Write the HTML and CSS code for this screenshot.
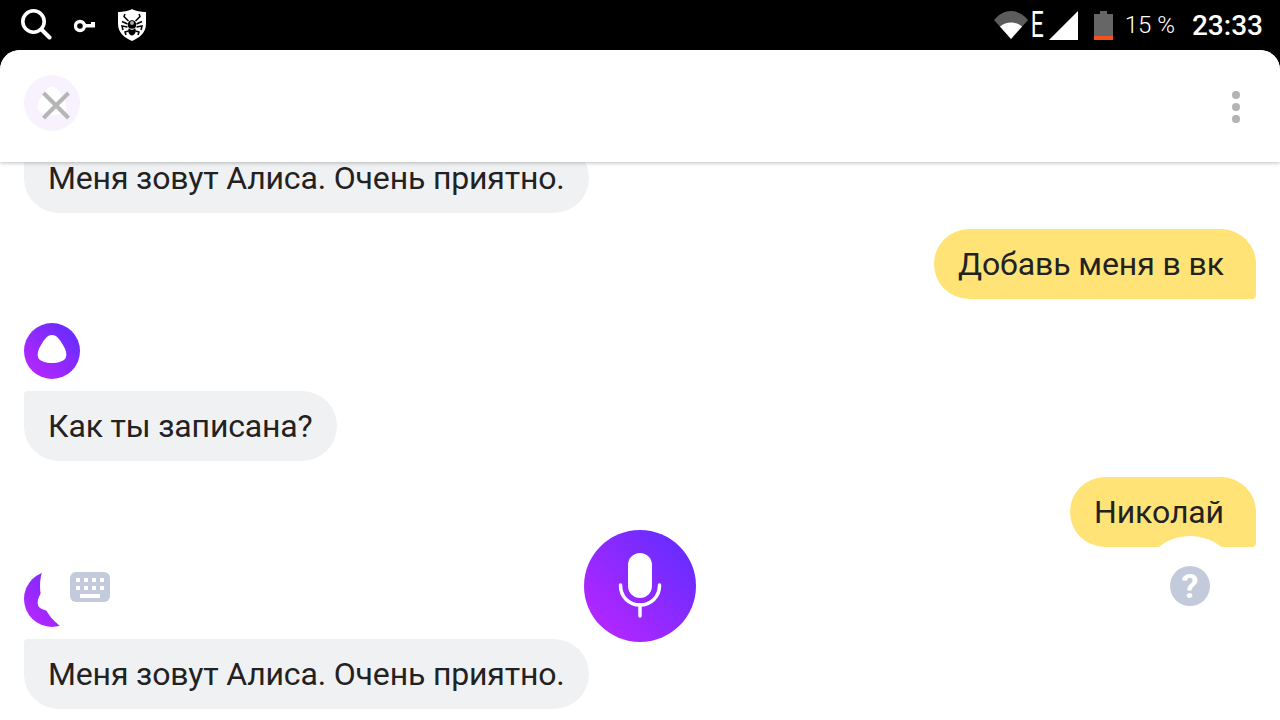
FILE: index.html
```html
<!DOCTYPE html>
<html lang="ru">
<head>
    <meta charset="UTF-8">
    <meta name="viewport" content="width=device-width, initial-scale=1.0">
    <title>Алиса</title>
    <link rel="stylesheet" href="styles.css">
</head>
<body>

    <div class="statusbar">
        <div class="status-left">
            <svg class="ic-search" width="32" height="32" viewBox="0 0 32 32"><circle cx="13.5" cy="12.5" r="10.7" fill="none" stroke="#fff" stroke-width="3.6"/><path d="M21.5 20.5 L29.5 28.5" stroke="#fff" stroke-width="4" stroke-linecap="round"/></svg>
            <svg class="ic-key" width="22" height="14" viewBox="0 0 22 14"><circle cx="6" cy="7" r="4.5" fill="none" stroke="#fff" stroke-width="3.4"/><path d="M10 5 H21 V8.500 H10 Z M17 3 H21 V6 H17 Z" fill="#fff"/></svg>
            <svg class="ic-shield" width="28" height="32" viewBox="0 0 28 32">
                <path d="M14 0 C17 2 23 3 28 3 V15 C28 24 21 29 14 32 C7 29 0 24 0 15 V3 C5 3 11 2 14 0 Z" fill="#fff"/>
                <path d="M10.500 13 C9 16 10 18 11 19 C9 22 11 26 14 26.500 C17 26 19 22 17 19 C18 18 19 16 17.500 13 C16 10.500 12 10.500 10.500 13 Z" fill="#000"/>
                <path d="M10.500 12 L6 7.500 L7 5 M17.500 12 L22 7.500 L21 5 M9.500 15 L4 12.500 M18.500 15 L24 12.500 M9.500 18 L4 17 L5 21 M18.500 18 L24 17 L23 21 M10.500 22 L7 23 L8 26 M17.500 22 L21 23 L20 26" stroke="#000" stroke-width="1.500" fill="none"/>
                <circle cx="14" cy="14" r="2" fill="#aaa"/>
                <path d="M11.500 19.500 C13 20.500 15 20.500 16.500 19.500" stroke="#fff" stroke-width="1" fill="none"/>
            </svg>
        </div>
        <div class="status-right">
            <svg class="ic-wifi" width="34" height="28" viewBox="0 0 34 28"><path d="M17 28 L0 9 C5 3 11 0 17 0 C23 0 29 3 34 9 Z" fill="#5c5c5c"/><path d="M17 28 L6 15.500 C9 13 13 11.500 17 11.500 C21 11.500 25 13 28 15.500 Z" fill="#fff"/></svg>
            <span class="net-letter">E</span>
            <svg class="ic-signal" width="29" height="29" viewBox="0 0 29 29"><path d="M29 0 V29 H0 Z" fill="#fff"/></svg>
            <svg class="ic-battery" width="19" height="29" viewBox="0 0 19 29"><path d="M6 0 H13 V3 H19 V25 H0 V3 H6 Z" fill="#666"/><rect y="25" width="19" height="4" fill="#f4511e"/></svg>
            <span class="battery-text">15 %</span>
            <span class="clock">23:33</span>
        </div>
    </div>

    <div class="sheet">
        <div class="topbar">
            <button class="close-btn" type="button">
                <svg width="56" height="56" viewBox="0 0 56 56">
                    <path d="M28 12 C33 12 36 17 39 22 C42 27 43 31 42 34 C41 38 34 40 28 40 C22 40 15 38 14 34 C13 31 14 27 17 22 C20 17 23 12 28 12 Z" fill="#fff"/>
                    <path d="M19.500 18 L44.500 43 M44.500 18 L19.500 43" stroke="#b5b5b5" stroke-width="4"/>
                </svg>
            </button>
            <div class="menu-dots"><i></i><i></i><i></i></div>
        </div>

        <div class="chat">
            <div class="msg msg-bot">Меня зовут Алиса. Очень приятно.</div>
            <div class="msg msg-user">Добавь меня в вк</div>
            <div class="avatar">
                <svg width="56" height="56" viewBox="0 0 56 56"><path d="M28 12 C33 12 36 17 39 22 C42 27 43 31 42 34 C41 38 34 40 28 40 C22 40 15 38 14 34 C13 31 14 27 17 22 C20 17 23 12 28 12 Z" fill="#fff"/></svg>
            </div>
            <div class="msg msg-bot">Как ты записана?</div>
            <div class="msg msg-user">Николай</div>
            <div class="avatar">
                <svg width="56" height="56" viewBox="0 0 56 56"><path d="M28 12 C33 12 36 17 39 22 C42 27 43 31 42 34 C41 38 34 40 28 40 C22 40 15 38 14 34 C13 31 14 27 17 22 C20 17 23 12 28 12 Z" fill="#fff"/></svg>
            </div>
            <div class="msg msg-bot">Меня зовут Алиса. Очень приятно.</div>
        </div>

        <div class="controls">
            <div class="side-btn">
                <svg class="ic-keyboard" width="40" height="30" viewBox="0 0 40 30">
                    <rect width="40" height="30" rx="6" fill="#c3cadb"/>
                    <path d="M6 6 h4 v4 h-4 z M14 6 h4 v4 h-4 z M22 6 h4 v4 h-4 z M30 6 h4 v4 h-4 z M6 14 h4 v4 h-4 z M14 14 h4 v4 h-4 z M22 14 h4 v4 h-4 z M30 14 h4 v4 h-4 z M10 22 h20 v4 h-20 z" fill="#fff"/>
                </svg>
            </div>
            <button class="mic-btn" type="button">
                <svg width="46" height="66" viewBox="0 0 46 66">
                    <rect x="11" y="0" width="24" height="45" rx="12" fill="#fff"/>
                    <path d="M3.500 32 C3.500 44 12 52 23 52 C34 52 42.500 44 42.500 32" fill="none" stroke="#fff" stroke-width="3.500" stroke-linecap="round"/>
                    <path d="M23 52 V63" stroke="#fff" stroke-width="3.500" stroke-linecap="round"/>
                </svg>
            </button>
            <div class="side-btn">
                <span class="help-icon">?</span>
            </div>
        </div>
    </div>

</body>
</html>
```

FILE: styles.css
```css
* {
  box-sizing: border-box;
}

html, body {
  height: 100%;
}

body {
  margin: 0;
  background-color: #000;
  font-family: 'Roboto', sans-serif;
  color: #222;
  overflow: hidden;
  display: flex;
  flex-direction: column;
}

/* status bar */
.statusbar {
  height: 50px;
  flex: none;
  display: flex;
  justify-content: space-between;
  align-items: center;
  padding: 0 17px 0 20px;
  color: #fff;
}

.status-left, .status-right {
  display: flex;
  align-items: center;
}

.ic-key {
  margin: 2px 0 0 22px;
}

.ic-shield {
  margin-left: 22px;
}

.net-letter {
  width: 14px;
  font-size: 37px;
  font-weight: 400;
  line-height: 28px;
  text-align: center;
  transform: scaleX(0.62);
}

.ic-signal {
  margin-left: 7px;
}

.ic-battery {
  margin-left: 16px;
}

.battery-text {
  margin-left: 12px;
  font-size: 24px;
  font-weight: 300;
}

.clock {
  margin-left: 17px;
  font-size: 28px;
  font-weight: 500;
}

/* main white sheet */
.sheet {
  position: relative;
  flex: 1;
  min-height: 0;
  display: flex;
  flex-direction: column;
  background-color: #fff;
  border-radius: 20px 20px 0 0;
  overflow: hidden;
}

.topbar {
  position: relative;
  z-index: 2;
  height: 112px;
  flex: none;
  display: flex;
  justify-content: space-between;
  align-items: center;
  padding: 0 40px 0 24px;
  background-color: #fff;
  box-shadow: 0 1px 4px rgba(0, 0, 0, 0.25);
}

.close-btn {
  width: 56px;
  height: 56px;
  margin-top: -7px;
  padding: 0;
  border: none;
  border-radius: 50%;
  background-color: #f7f2fe;
}

.close-btn svg, .avatar svg {
  display: block;
}

.menu-dots {
  display: flex;
  flex-direction: column;
  gap: 4px;
  margin-top: 1px;
}

.menu-dots i {
  width: 8px;
  height: 8px;
  border-radius: 50%;
  background-color: #b3b3b3;
}

/* chat */
.chat {
  flex: 1;
  min-height: 0;
  display: flex;
  flex-direction: column;
  justify-content: flex-end;
  align-items: flex-start;
  padding: 0 24px 11px;
  overflow: hidden;
}

.msg {
  flex: none;
  height: 70px;
  padding: 0 24px;
  font-size: 32px;
  letter-spacing: -0.16px;
  line-height: 70px;
  white-space: nowrap;
}

.msg-bot {
  background-color: #f0f1f3;
  border-radius: 4px 35px 35px 35px;
}

.msg-user {
  align-self: flex-end;
  margin: 16px 0 24px;
  padding-right: 32px;
  letter-spacing: -0.09px;
  background-color: #ffe376;
  border-radius: 35px 35px 4px 35px;
}

.avatar {
  flex: none;
  width: 56px;
  height: 56px;
  margin-bottom: 12px;
  border-radius: 50%;
  background: linear-gradient(45deg, #c026ff, #5a2dff);
}

/* bottom controls over the chat */
.controls {
  position: absolute;
  left: 40px;
  right: 40px;
  bottom: 78px;
  z-index: 1;
  display: flex;
  justify-content: space-between;
  align-items: center;
}

.side-btn {
  width: 100px;
  height: 100px;
  display: flex;
  justify-content: center;
  align-items: center;
  border-radius: 50%;
  background-color: #fff;
}

.ic-keyboard {
  margin-top: 2px;
}

.mic-btn {
  width: 112px;
  height: 112px;
  padding: 0;
  display: flex;
  justify-content: center;
  align-items: center;
  border: none;
  border-radius: 50%;
  background: linear-gradient(45deg, #c026ff, #5a2dff);
}

.help-icon {
  width: 40px;
  height: 40px;
  border-radius: 50%;
  background-color: #c3cadb;
  color: #fff;
  font-size: 34px;
  font-weight: 700;
  line-height: 40px;
  text-align: center;
}
```
